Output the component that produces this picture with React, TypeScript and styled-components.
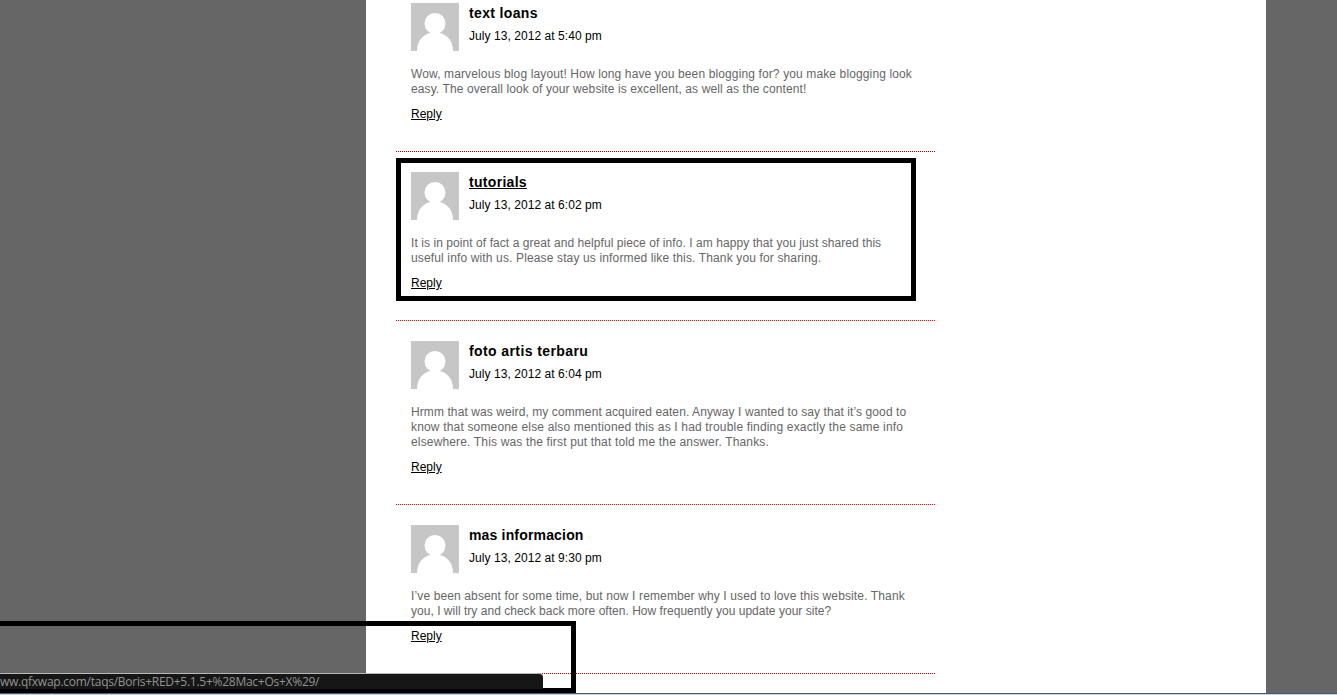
import React from "react";
import styled, { createGlobalStyle } from "styled-components";

const GlobalStyle = createGlobalStyle`
  html, body {
    margin: 0;
    padding: 0;
    height: 100%;
    overflow: hidden;
    background: #666666;
  }
`;

type BodyLineData = { text: string; spacing: number };

type CommentData = {
  author: string;
  authorSpacing: number;
  date: string;
  body: BodyLineData[];
  hovered?: boolean;
  rule: string;
};

// the reference is hinted Arial, so every line gets its own tracking to keep its width
const comments: CommentData[] = [
  {
    author: "text loans",
    authorSpacing: 0.35,
    date: "July 13, 2012 at 5:40 pm",
    body: [
      { text: "Wow, marvelous blog layout! How long have you been blogging for? you make blogging look", spacing: 0.125 },
      { text: "easy. The overall look of your website is excellent, as well as the content!", spacing: 0.1 },
    ],
    rule: "#b00000",
  },
  {
    author: "tutorials",
    authorSpacing: 0.3,
    date: "July 13, 2012 at 6:02 pm",
    body: [
      { text: "It is in point of fact a great and helpful piece of info. I am happy that you just shared this", spacing: 0.07 },
      { text: "useful info with us. Please stay us informed like this. Thank you for sharing.", spacing: 0.14 },
    ],
    hovered: true,
    rule: "#ee0000",
  },
  {
    author: "foto artis terbaru",
    authorSpacing: 0.4,
    date: "July 13, 2012 at 6:04 pm",
    body: [
      { text: "Hrmm that was weird, my comment acquired eaten. Anyway I wanted to say that it\u2019s good to", spacing: 0.09 },
      { text: "know that someone else also mentioned this as I had trouble finding exactly the same info", spacing: 0.17 },
      { text: "elsewhere. This was the first put that told me the answer. Thanks.", spacing: 0.155 },
    ],
    rule: "#ee0000",
  },
  {
    author: "mas informacion",
    authorSpacing: 0.17,
    date: "July 13, 2012 at 9:30 pm",
    body: [
      { text: "I\u2019ve been absent for some time, but now I remember why I used to love this website. Thank", spacing: 0.125 },
      { text: "you, I will try and check back more often. How frequently you update your site?", spacing: 0.025 },
    ],
    rule: "#b00000",
  },
];

function Avatar() {
  return (
    <AvatarBox viewBox="0 0 48 48" aria-hidden="true">
      <rect width="48" height="48" fill="#c6c6c6" />
      <circle cx="24" cy="20.5" r="10.5" fill="#ffffff" />
      <path d="M6 48C6 37 13 29.5 24 29.5S42 37 42 48Z" fill="#ffffff" />
    </AvatarBox>
  );
}

export default function App() {
  return (
    <>
      <GlobalStyle />
      <Page>
        <Sheet>
          <CommentList>
            {comments.map((c) => (
              <CommentItem key={c.author} $rule={c.rule}>
                <CommentHead>
                  <Avatar />
                  <Meta>
                    <Author $hovered={c.hovered} $spacing={c.authorSpacing}>
                      {c.author}
                    </Author>
                    <DateLine>{c.date}</DateLine>
                  </Meta>
                </CommentHead>
                <Body>
                  {c.body.map((line) => (
                    <BodyLine key={line.text} $spacing={line.spacing}>
                      {line.text}
                    </BodyLine>
                  ))}
                </Body>
                <ReplyLink href="#">Reply</ReplyLink>
              </CommentItem>
            ))}
          </CommentList>
        </Sheet>
        <TopFrame />
        <BottomFrame />
        <StatusBar>ww.qfxwap.com/taqs/Boris+RED+5.1.5+%28Mac+Os+X%29/</StatusBar>
        <WindowEdge />
      </Page>
    </>
  );
}

const Page = styled.div`
  position: relative;
  width: 1337px;
  height: 695px;
  overflow: hidden;
  background: #666666;
  font-family: "Liberation Sans", Arial, sans-serif;
`;

const Sheet = styled.main`
  width: 540px;
  height: 720px;
  margin: -17px 0 0 366px;
  padding: 0 330px 0 30px;
  background: #ffffff;
`;

const CommentList = styled.ol`
  list-style: none;
  margin: 0;
  padding: 0;
  width: 540px;
`;

const CommentItem = styled.li<{ $rule: string }>`
  padding: 20px 15px 31px;
  background: repeating-linear-gradient(
      90deg,
      ${({ $rule }) => $rule} 0 1px,
      transparent 1px 2px
    )
    left bottom / 100% 1px no-repeat;
`;

const CommentHead = styled.div`
  display: flex;
  gap: 10px;
  height: 48px;
`;

const AvatarBox = styled.svg`
  display: block;
  width: 48px;
  height: 48px;
  flex: none;
`;

const Meta = styled.div`
  display: flex;
  flex-direction: column;
  padding-top: 2px;
`;

const Author = styled.a<{ $hovered?: boolean; $spacing: number }>`
  width: fit-content;
  font-size: 14px;
  line-height: 16px;
  font-weight: 700;
  letter-spacing: ${({ $spacing }) => $spacing}px;
  color: #000000;
  text-decoration: ${({ $hovered }) => ($hovered ? "underline" : "none")};
`;

const DateLine = styled.span`
  margin-top: 8px;
  font-size: 12px;
  line-height: 14px;
  letter-spacing: 0.06px;
  color: #000000;
`;

const Body = styled.div`
  margin-top: 16px;
  font-size: 12px;
  line-height: 15px;
  color: #666666;
`;

const BodyLine = styled.div<{ $spacing: number }>`
  white-space: nowrap;
  letter-spacing: ${({ $spacing }) => $spacing}px;
`;

const ReplyLink = styled.a`
  display: block;
  width: fit-content;
  margin-top: 10px;
  font-size: 12px;
  line-height: 14px;
  color: #000000;
  text-decoration: underline;
`;

const TopFrame = styled.div`
  position: absolute;
  left: 396px;
  top: 158px;
  width: 510px;
  height: 133px;
  border: 5px solid #000000;
`;

const BottomFrame = styled.div`
  position: absolute;
  left: -10px;
  top: 621px;
  width: 576px;
  height: 62px;
  border: 5px solid #000000;
`;

const StatusBar = styled.div`
  position: absolute;
  left: 0;
  top: 673px;
  width: 543px;
  height: 16px;
  box-sizing: border-box;
  padding-top: 1px;
  background: #161616;
  border-top-right-radius: 4px;
  border-top: 1px solid #b8b8b8;
  font-family: "Open Sans", sans-serif;
  font-size: 12px;
  line-height: 14px;
  letter-spacing: -0.26px;
  color: #929292;
  white-space: nowrap;
`;

const WindowEdge = styled.div`
  position: absolute;
  left: 0;
  top: 693px;
  width: 1337px;
  height: 2px;
  background: linear-gradient(#4a5a70 0 1px, #c4d4e6 1px);
`;
